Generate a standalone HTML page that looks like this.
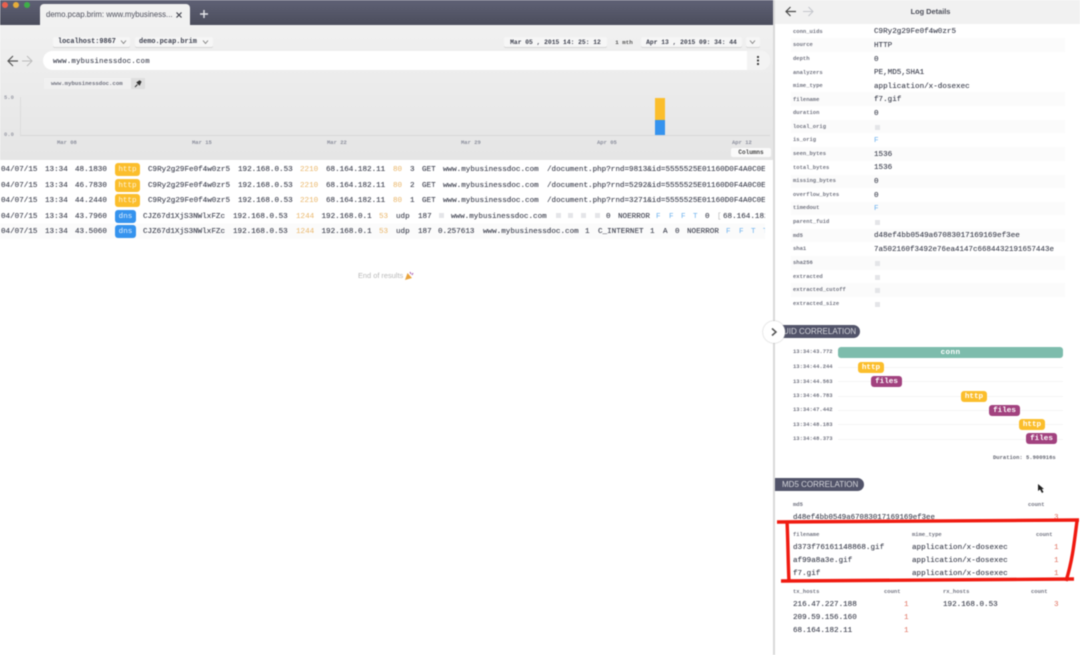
<!DOCTYPE html>
<html><head><meta charset="utf-8">
<style>
html,body{margin:0;padding:0;width:1080px;height:655px;overflow:hidden;background:#fff}
#root{position:relative;width:1080px;height:655px;overflow:hidden;filter:blur(.45px)}
.a{position:absolute}
.t{position:absolute;margin-top:.7px;font:7.6px/10px "Liberation Mono",monospace;color:#3f4250;white-space:pre;-webkit-text-stroke:.12px #3f4250}
.k{position:absolute;font:5.5px/8px "Liberation Mono",monospace;color:#4f5262;white-space:pre;font-weight:bold;opacity:.8}
.t.o{color:#e9b567;-webkit-text-stroke:0}.t.b{color:#6fb2ee;-webkit-text-stroke:0}.t.r{color:#e0705f;-webkit-text-stroke:0}
.badge{position:absolute;border-radius:3px;color:rgba(255,255,255,.85);font:7.6px/15px "Liberation Mono",monospace;text-align:center;height:13px}
.tb{height:11px;line-height:13px;font-weight:bold;color:#fff}
.btn{position:absolute;background:#f6f6f6;border-radius:2px;box-shadow:0 1px 0 #d6d6d6;height:10px;font:bold 6.3px/11px "Liberation Mono",monospace;color:#3f4250;white-space:pre;text-align:center}
.sq{position:absolute;width:5px;height:5px;background:#e4e5e8}
.gl{position:absolute;height:1px;background:#f5f5f5;left:838px;width:225px}
.pill{position:absolute;background:#52546a;color:#d5d6dc;border-radius:0 7px 7px 0;height:13px;font:8px/13px "Liberation Sans",sans-serif;white-space:pre}
.rowbg{position:absolute;left:791px;width:274px;height:13.6px;background:#fbfbfb}
</style></head><body>
<div id="root">
<!-- left top -->
<div class="a" style="left:0;top:24px;width:775px;height:136px;background:linear-gradient(#f1f1f1,#e5e5e5)"></div>
<div class="a" style="left:0;top:0;width:775px;height:25px;background:linear-gradient(#5f6175,#4b4d5c)"></div>
<div class="a" style="left:2px;top:2px;width:6px;height:6px;border-radius:50%;background:#e8604e"></div>
<div class="a" style="left:13px;top:2px;width:6px;height:6px;border-radius:50%;background:#e5ad3a"></div>
<div class="a" style="left:24px;top:2px;width:6px;height:6px;border-radius:50%;background:#3fae49"></div>
<div class="a" style="left:40px;top:4px;width:150px;height:21px;background:#f1f1f1;border-radius:4px 4px 0 0"></div>
<div class="a" style="left:46px;top:9px;font:7.8px/12px 'Liberation Sans',sans-serif;color:#4d4f5c;white-space:pre">demo.pcap.brim: www.mybusiness...</div>
<svg class="a" style="left:174.5px;top:11px" width="8" height="8"><path d="M1.5 1.5L6.5 6.5M6.5 1.5L1.5 6.5" stroke="#43454f" stroke-width="1.2"/></svg>
<svg class="a" style="left:199px;top:9px" width="10" height="10"><path d="M5 1V9M1 5H9" stroke="#e3e4e8" stroke-width="1.4"/></svg>

<div class="btn" style="left:53px;top:37px;width:77px;text-align:left;padding-left:5px;box-sizing:border-box;font-size:6.9px">localhost:9867</div>
<svg class="a" style="left:120px;top:40px" width="7" height="5"><path d="M1 .5L3.5 3.5L6 .5" stroke="#777" fill="none" stroke-width=".8"/></svg>
<div class="btn" style="left:135px;top:37px;width:78px;text-align:left;padding-left:4px;box-sizing:border-box;font-size:6.9px">demo.pcap.brim</div>
<svg class="a" style="left:202px;top:40px" width="7" height="5"><path d="M1 .5L3.5 3.5L6 .5" stroke="#777" fill="none" stroke-width=".8"/></svg>
<div class="btn" style="left:504px;top:37px;width:103px">Mar 05 , 2015 14: 25: 12</div>
<div class="a" style="left:608px;top:37.5px;width:32px;text-align:center;font:bold 5.8px/10px 'Liberation Mono',monospace;color:#555">1 mth</div>
<div class="btn" style="left:641px;top:37px;width:101px">Apr 13 , 2015 09: 34: 44</div>
<div class="btn" style="left:746px;top:37px;width:14px"></div>
<svg class="a" style="left:749px;top:40px" width="7" height="5"><path d="M1 .5L3.5 3.5L6 .5" stroke="#777" fill="none" stroke-width=".8"/></svg>

<svg class="a" style="left:6px;top:54px" width="32" height="14"><path d="M12 7H2M7 2L2 7L7 12" stroke="#555" fill="none" stroke-width="1.2"/><path d="M28 7H19M24 2L29 7L24 12" stroke="#bbb" fill="none" stroke-width="1" transform="translate(-3 0)"/></svg>
<div class="a" style="left:43px;top:51px;width:727px;height:19px;background:#fff;border-radius:10px"></div>
<div class="a" style="left:747px;top:51px;width:23px;height:19px;background:#f3f3f3;border-radius:0 10px 10px 0"></div>
<div class="a" style="left:757px;top:56px;width:2.4px;height:2.4px;background:#444;box-shadow:0 3.5px #444,0 7px #444"></div>
<div class="t" style="left:53px;top:56px;font-size:7.2px;letter-spacing:.3px">www.mybusinessdoc.com</div>
<div class="a" style="left:44px;top:78px;width:87px;height:11px;background:#f0f0f0"></div>
<div class="a" style="left:131px;top:78px;width:14px;height:11px;background:#dedede"></div>
<div class="k" style="left:51px;top:79.5px;font-size:5.7px">www.mybusinessdoc.com</div>
<svg class="a" style="left:134px;top:80px" width="8" height="8"><path d="M1 7L3.5 4.5M3 2.5L5.5 5L7 1.8L5.6 .8Z" stroke="#333" fill="#333" stroke-width=".9"/></svg>

<!-- chart -->
<div class="k" style="left:4px;top:94px;color:#8a8c99">5.0</div>
<div class="k" style="left:4px;top:131px;color:#8a8c99">0.0</div>
<div class="a" style="left:20px;top:97px;width:1px;height:39px;background:#dcdcdc"></div>
<div class="a" style="left:20px;top:135px;width:750px;height:1px;background:#d8d8d8"></div>
<div class="a" style="left:655px;top:97.5px;width:10px;height:23px;background:#fbbe2c"></div>
<div class="a" style="left:655px;top:120px;width:10px;height:15px;background:#3593ee"></div>
<div class="k" style="left:57px;top:138.5px;color:#777b8c">Mar 08</div>
<div class="k" style="left:192px;top:138.5px;color:#777b8c">Mar 15</div>
<div class="k" style="left:327px;top:138.5px;color:#777b8c">Mar 22</div>
<div class="k" style="left:461px;top:138.5px;color:#777b8c">Mar 29</div>
<div class="k" style="left:597px;top:138.5px;color:#777b8c">Apr 05</div>
<div class="k" style="left:732px;top:138.5px;color:#777b8c">Apr 12</div>
<div class="a" style="left:731px;top:148px;width:40px;height:9px;background:#fafafa;border-radius:2px;text-align:center;font:bold 6px/10px 'Liberation Mono',monospace;color:#444">Columns</div>

<!-- rows -->
<div class="a" style="left:0;top:208px;width:765px;height:31px;overflow:hidden;background:linear-gradient(#fff 50%,#fbfbfb 50%)"></div>
<div class="a" style="left:0;top:160.4px;width:765px;height:80px;overflow:hidden" id="rows">
<span class="t" style="left:1px;top:4px">04/07/15</span><span class="t" style="left:45px;top:4px">13:34</span><span class="t" style="left:75px;top:4px">48.1830</span>
<div class="badge" style="left:115px;top:3px;width:25px;background:#fbbe2c">http</div>
<span class="t" style="left:148px;top:4px">C9Ry2g29Fe0f4w0zr5</span><span class="t" style="left:238px;top:4px">192.168.0.53</span><span class="t o" style="left:300px;top:4px">2210</span><span class="t" style="left:326px;top:4px">68.164.182.11</span><span class="t o" style="left:393px;top:4px">80</span><span class="t" style="left:410px;top:4px">3</span><span class="t" style="left:422px;top:4px">GET</span><span class="t" style="left:443px;top:4px">www.mybusinessdoc.com</span><span class="t" style="left:547px;top:4px">/document.php?rnd=9813&amp;id=5555525E01160D0F4A0C0E</span>

<span class="t" style="left:1px;top:19.5px">04/07/15</span><span class="t" style="left:45px;top:19.5px">13:34</span><span class="t" style="left:75px;top:19.5px">46.7830</span>
<div class="badge" style="left:115px;top:18.5px;width:25px;background:#fbbe2c">http</div>
<span class="t" style="left:148px;top:19.5px">C9Ry2g29Fe0f4w0zr5</span><span class="t" style="left:238px;top:19.5px">192.168.0.53</span><span class="t o" style="left:300px;top:19.5px">2210</span><span class="t" style="left:326px;top:19.5px">68.164.182.11</span><span class="t o" style="left:393px;top:19.5px">80</span><span class="t" style="left:410px;top:19.5px">2</span><span class="t" style="left:422px;top:19.5px">GET</span><span class="t" style="left:443px;top:19.5px">www.mybusinessdoc.com</span><span class="t" style="left:547px;top:19.5px">/document.php?rnd=5292&amp;id=5555525E01160D0F4A0C0E</span>

<span class="t" style="left:1px;top:35px">04/07/15</span><span class="t" style="left:45px;top:35px">13:34</span><span class="t" style="left:75px;top:35px">44.2440</span>
<div class="badge" style="left:115px;top:34px;width:25px;background:#fbbe2c">http</div>
<span class="t" style="left:148px;top:35px">C9Ry2g29Fe0f4w0zr5</span><span class="t" style="left:238px;top:35px">192.168.0.53</span><span class="t o" style="left:300px;top:35px">2210</span><span class="t" style="left:326px;top:35px">68.164.182.11</span><span class="t o" style="left:393px;top:35px">80</span><span class="t" style="left:410px;top:35px">1</span><span class="t" style="left:422px;top:35px">GET</span><span class="t" style="left:443px;top:35px">www.mybusinessdoc.com</span><span class="t" style="left:547px;top:35px">/document.php?rnd=3271&amp;id=5555525E01160D0F4A0C0E</span>

<span class="t" style="left:1px;top:50.5px">04/07/15</span><span class="t" style="left:45px;top:50.5px">13:34</span><span class="t" style="left:75px;top:50.5px">43.7960</span>
<div class="badge" style="left:115px;top:49.5px;width:21px;background:#3593ee">dns</div>
<span class="t" style="left:143px;top:50.5px">CJZ67d1XjS3NWlxFZc</span><span class="t" style="left:233px;top:50.5px">192.168.0.53</span><span class="t o" style="left:296px;top:50.5px">1244</span><span class="t" style="left:321.5px;top:50.5px">192.168.0.1</span><span class="t o" style="left:379px;top:50.5px">53</span><span class="t" style="left:396px;top:50.5px">udp</span><span class="t" style="left:418px;top:50.5px">187</span>
<i class="sq" style="left:439px;top:53px"></i><span class="t" style="left:451px;top:50.5px">www.mybusinessdoc.com</span><i class="sq" style="left:556px;top:53px"></i><i class="sq" style="left:568px;top:53px"></i><i class="sq" style="left:581px;top:53px"></i><i class="sq" style="left:595px;top:53px"></i><span class="t" style="left:606px;top:50.5px">0</span><span class="t" style="left:618px;top:50.5px">NOERROR</span><span class="t b" style="left:656px;top:50.5px">F</span><span class="t b" style="left:669px;top:50.5px">F</span><span class="t b" style="left:681px;top:50.5px">F</span><span class="t b" style="left:693px;top:50.5px">T</span><span class="t" style="left:705px;top:50.5px">0</span><span class="t" style="left:717px;top:50.5px;color:#bbb;-webkit-text-stroke:0">[</span><span class="t" style="left:723px;top:50.5px">68.164.182.11</span>

<span class="t" style="left:1px;top:66px">04/07/15</span><span class="t" style="left:45px;top:66px">13:34</span><span class="t" style="left:75px;top:66px">43.5060</span>
<div class="badge" style="left:115px;top:65px;width:21px;background:#3593ee">dns</div>
<span class="t" style="left:143px;top:66px">CJZ67d1XjS3NWlxFZc</span><span class="t" style="left:233px;top:66px">192.168.0.53</span><span class="t o" style="left:296px;top:66px">1244</span><span class="t" style="left:321.5px;top:66px">192.168.0.1</span><span class="t o" style="left:379px;top:66px">53</span><span class="t" style="left:396px;top:66px">udp</span><span class="t" style="left:418px;top:66px">187</span><span class="t" style="left:438px;top:66px">0.257613</span><span class="t" style="left:483px;top:66px">www.mybusinessdoc.com</span><span class="t" style="left:585px;top:66px">1</span><span class="t" style="left:598px;top:66px">C_INTERNET</span><span class="t" style="left:650px;top:66px">1</span><span class="t" style="left:663px;top:66px">A</span><span class="t" style="left:675px;top:66px">0</span><span class="t" style="left:687px;top:66px">NOERROR</span><span class="t b" style="left:726px;top:66px">F</span><span class="t b" style="left:739px;top:66px">F</span><span class="t b" style="left:751px;top:66px">T</span><span class="t b" style="left:763px;top:66px">T</span>
</div>
<div class="a" style="left:358px;top:271px;font:7.4px/10px 'Liberation Sans',sans-serif;color:#b8b8b8;white-space:pre">End of results</div>
<svg class="a" style="left:403.5px;top:271px" width="10" height="10"><path d="M1 9L3.5 2L8 7Z" fill="#e9a33c"/><path d="M6 1L7 3M9 2L8 4" stroke="#a85fb0" stroke-width="1"/></svg>

<!-- right panel -->
<div class="a" style="left:773px;top:0;width:1.5px;height:655px;background:#d9d9d9"></div>
<div class="a" style="left:775px;top:0;width:305px;height:24px;background:#f1f1f1"></div>
<svg class="a" style="left:784px;top:5px" width="32" height="13"><path d="M12 6.5H2M6.5 2L2 6.5L6.5 11" stroke="#4a4a4a" fill="none" stroke-width="1.2"/><path d="M19 6.5H29M24.5 2L29 6.5L24.5 11" stroke="#c4c6cc" fill="none" stroke-width="1"/></svg>
<div class="a" style="left:775px;top:6.7px;width:311px;text-align:center;font:bold 7.4px/10px 'Liberation Sans',sans-serif;color:#4d4f5a">Log Details</div>
<div class="rowbg" style="top:38px"></div><div class="rowbg" style="top:92px"></div><div class="rowbg" style="top:119.5px"></div><div class="rowbg" style="top:147px"></div><div class="rowbg" style="top:174.5px"></div><div class="rowbg" style="top:201.5px"></div><div class="rowbg" style="top:228.5px"></div><div class="rowbg" style="top:256px"></div><div class="rowbg" style="top:283px"></div>

<div class="k" style="left:793px;top:28px">conn_uids</div><div class="t" style="left:874px;top:26.5px">C9Ry2g29Fe0f4w0zr5</div>
<div class="k" style="left:793px;top:41px">source</div><div class="t" style="left:874px;top:40px">HTTP</div>
<div class="k" style="left:793px;top:55px">depth</div><div class="t" style="left:874px;top:54px">0</div>
<div class="k" style="left:793px;top:69px">analyzers</div><div class="t" style="left:874px;top:67.5px">PE,MD5,SHA1</div>
<div class="k" style="left:793px;top:82px">mime_type</div><div class="t" style="left:874px;top:81px">application/x-dosexec</div>
<div class="k" style="left:793px;top:96px">filename</div><div class="t" style="left:874px;top:94.5px">f7.gif</div>
<div class="k" style="left:793px;top:109px">duration</div><div class="t" style="left:874px;top:108px">0</div>
<div class="k" style="left:793px;top:123px">local_orig</div><i class="sq" style="left:875px;top:125px"></i>
<div class="k" style="left:793px;top:136px">is_orig</div><div class="t b" style="left:874px;top:135.5px">F</div>
<div class="k" style="left:793px;top:150px">seen_bytes</div><div class="t" style="left:874px;top:149px">1536</div>
<div class="k" style="left:793px;top:164px">total_bytes</div><div class="t" style="left:874px;top:162.5px">1536</div>
<div class="k" style="left:793px;top:177px">missing_bytes</div><div class="t" style="left:874px;top:176px">0</div>
<div class="k" style="left:793px;top:191px">overflow_bytes</div><div class="t" style="left:874px;top:190px">0</div>
<div class="k" style="left:793px;top:204px">timedout</div><div class="t b" style="left:874px;top:203px">F</div>
<div class="k" style="left:793px;top:218px">parent_fuid</div><i class="sq" style="left:875px;top:220px"></i>
<div class="k" style="left:793px;top:232px">md5</div><div class="t" style="left:874px;top:230.5px">d48ef4bb0549a67083017169169ef3ee</div>
<div class="k" style="left:793px;top:245px">sha1</div><div class="t" style="left:874px;top:244px;font-size:7.5px">7a502160f3492e76ea4147c6684432191657443e</div>
<div class="k" style="left:793px;top:259px">sha256</div><i class="sq" style="left:875px;top:261px"></i>
<div class="k" style="left:793px;top:273px">extracted</div><i class="sq" style="left:875px;top:275px"></i>
<div class="k" style="left:793px;top:286px">extracted_cutoff</div><i class="sq" style="left:875px;top:288px"></i>
<div class="k" style="left:793px;top:300px">extracted_size</div><i class="sq" style="left:875px;top:302px"></i>

<!-- UID -->
<div class="pill" style="left:775px;top:325px;width:85px;padding-left:8px;box-sizing:border-box">UID CORRELATION</div>
<div class="a" style="left:763px;top:321px;width:22px;height:22px;border-radius:50%;background:#fff;box-shadow:0 0 1.5px #aaa"></div>
<svg class="a" style="left:770px;top:327px" width="8" height="10"><path d="M2 1.5L6 5L2 8.5" stroke="#555" fill="none" stroke-width="1.5"/></svg>
<div class="k" style="left:793px;top:348px">13:34:43.772</div>
<div class="k" style="left:793px;top:363px">13:34:44.244</div>
<div class="k" style="left:793px;top:377.5px">13:34:44.563</div>
<div class="k" style="left:793px;top:392px">13:34:46.783</div>
<div class="k" style="left:793px;top:406px">13:34:47.442</div>
<div class="k" style="left:793px;top:420.5px">13:34:48.183</div>
<div class="k" style="left:793px;top:435px">13:34:48.373</div>
<div class="gl" style="top:367px"></div><div class="gl" style="top:381px"></div><div class="gl" style="top:396px"></div><div class="gl" style="top:410px"></div><div class="gl" style="top:424px"></div><div class="gl" style="top:439px"></div>
<div class="badge tb" style="left:838px;top:347px;width:225px;background:#7dbcac;letter-spacing:.4px">conn</div>
<div class="badge tb" style="left:858px;top:361.5px;width:26px;background:#fbbe2c">http</div>
<div class="badge tb" style="left:871px;top:376px;width:31px;background:#a2427f">files</div>
<div class="badge tb" style="left:961px;top:390.5px;width:26px;background:#fbbe2c">http</div>
<div class="badge tb" style="left:989px;top:404.5px;width:31px;background:#a2427f">files</div>
<div class="badge tb" style="left:1019px;top:419px;width:26px;background:#fbbe2c">http</div>
<div class="badge tb" style="left:1026px;top:433px;width:31px;background:#a2427f">files</div>
<div class="k" style="left:993px;top:454px;color:#3f4250">Duration: 5.900916s</div>

<!-- MD5 -->
<div class="pill" style="left:775px;top:478px;width:89px;padding-left:7px;box-sizing:border-box">MD5 CORRELATION</div>
<svg class="a" style="left:1037px;top:483px" width="8" height="11"><path d="M1 1L1 8L3 6.5L5 10L6.5 9L4.8 6L7 6Z" fill="#222"/></svg>
<div class="k" style="left:793px;top:501px">md5</div><div class="k" style="left:1028px;top:501px">count</div>
<div class="t" style="left:793px;top:512px;font-size:7.4px">d48ef4bb0549a67083017169169ef3ee</div><div class="t r" style="left:1054px;top:512px">3</div>
<div class="k" style="left:793px;top:531px">filename</div><div class="k" style="left:912px;top:531px">mime_type</div><div class="k" style="left:1036px;top:531px">count</div>
<div class="t" style="left:793px;top:542px">d373f76161148868.gif</div><div class="t" style="left:912px;top:542px">application/x-dosexec</div><div class="t r" style="left:1054px;top:542px">1</div>
<div class="t" style="left:793px;top:555px">af99a8a3e.gif</div><div class="t" style="left:912px;top:555px">application/x-dosexec</div><div class="t r" style="left:1054px;top:555px">1</div>
<div class="t" style="left:793px;top:568px">f7.gif</div><div class="t" style="left:912px;top:568px">application/x-dosexec</div><div class="t r" style="left:1054px;top:568px">1</div>
<div class="k" style="left:793px;top:588px">tx_hosts</div><div class="k" style="left:884px;top:588px">count</div><div class="k" style="left:943px;top:588px">rx_hosts</div><div class="k" style="left:1031px;top:588px">count</div>
<div class="t" style="left:793px;top:599px">216.47.227.188</div><div class="t r" style="left:904px;top:599px">1</div><div class="t" style="left:943px;top:599px">192.168.0.53</div><div class="t r" style="left:1054px;top:599px">3</div>
<div class="t" style="left:793px;top:612px">209.59.156.160</div><div class="t r" style="left:904px;top:612px">1</div>
<div class="t" style="left:793px;top:625px">68.164.182.11</div><div class="t r" style="left:904px;top:625px">1</div>

<!-- red annotation -->
<svg class="a" style="left:0;top:0" width="1080" height="655" fill="none">
<path d="M777 522C840 521 950 520 1079 520" stroke="#f01a10" stroke-width="3.4"/>
<path d="M787 521C788 540 788 560 789 582" stroke="#f01a10" stroke-width="3.4"/>
<path d="M781 581C860 580 960 579 1074 579" stroke="#f01a10" stroke-width="3.4"/>
<path d="M1077 521C1074 545 1072 562 1066 581" stroke="#f01a10" stroke-width="3.4"/>
</svg>
</div>
</body></html>
